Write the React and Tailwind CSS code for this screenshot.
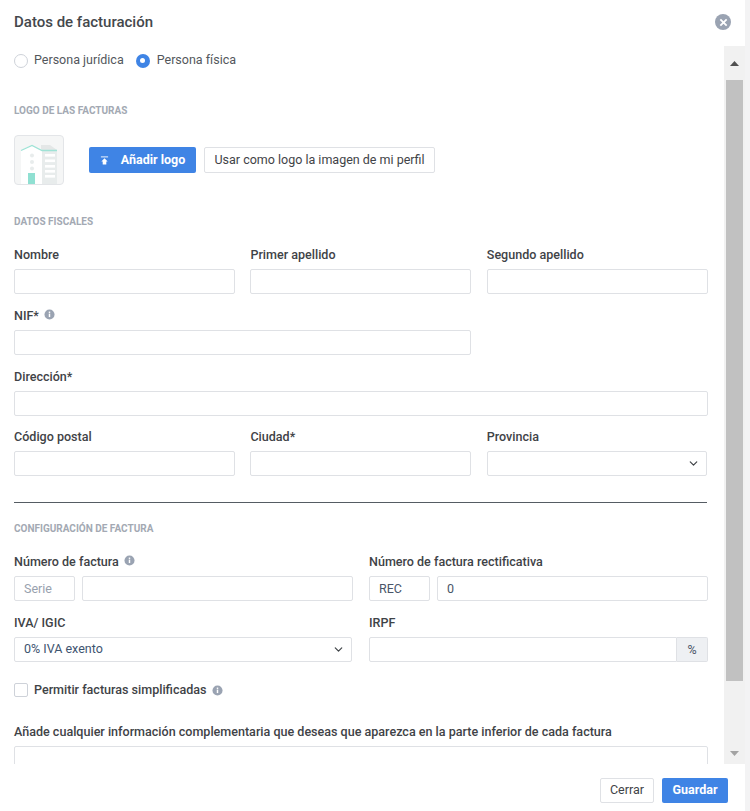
import { ChevronDown } from "lucide-react";

function InfoIcon({ className }) {
  return (
    <svg viewBox="0 0 12 12" className={className}>
      <circle cx="6" cy="6" r="5.5" fill="#9aa3b2" />
      <rect x="5.2" y="5" width="1.6" height="3.8" fill="#fff" />
      <rect x="5.2" y="2.8" width="1.6" height="1.5" fill="#fff" />
    </svg>
  );
}

function BuildingLogo() {
  return (
    <div className="w-[50px] h-[50px] rounded-[4px] border border-[#e3e5e8] bg-[#f5f6f6] overflow-hidden">
      <svg viewBox="0 0 48 48" className="w-full h-full">
        <path d="M26 9 L35 9 L42 14 L26 14 Z" fill="#e4e7e7" />
        <path d="M6 14 L17 9 L27 14 L27 48 L6 48 Z" fill="#fff" />
        <rect x="27" y="14" width="15" height="34" fill="#e8ecec" />
        <path d="M6 14.5 L17 9.5 L27 14.5 L42 14.5" fill="none" stroke="#9fe3d6" strokeWidth="1.3" />
        <circle cx="17" cy="19.5" r="2" fill="#e8ecec" />
        <circle cx="17" cy="26" r="2" fill="#e8ecec" />
        <circle cx="17" cy="32.5" r="2" fill="#e8ecec" />
        <rect x="13" y="37" width="7" height="11" fill="#90e0d2" />
        <rect x="30" y="18" width="10" height="2.6" fill="#fff" />
        <rect x="30" y="23.5" width="10" height="2.6" fill="#fff" />
        <rect x="30" y="29" width="10" height="2.6" fill="#fff" />
        <rect x="30" y="34" width="10" height="2.6" fill="#fff" />
        <rect x="30" y="39" width="10" height="2.6" fill="#fff" />
      </svg>
    </div>
  );
}

function Label({ children, info }) {
  return (
    <div className="h-[15px] mb-[7px] flex items-center gap-[5px] text-[12.55px] leading-[15px] font-medium text-[#3f4347]">
      <span>{children}</span>
      {info && <InfoIcon className="w-[11px] h-[11px] mt-[-2px]" />}
    </div>
  );
}

function Input({ value, placeholder, className = "" }) {
  return (
    <div className={`h-[25px] rounded-[2px] border border-[#dfe1e5] bg-white px-[9px] text-[12.5px] leading-[23px] ${placeholder ? "text-[#98a1ae]" : "text-[#4a5568]"} ${className}`}>
      {value || placeholder}
    </div>
  );
}

function Select({ value, className = "" }) {
  return (
    <div className={`h-[25px] rounded-[2px] border border-[#dfe1e5] bg-white pl-[9px] pr-[6px] flex items-center justify-between text-[12.5px] text-[#3e5470] ${className}`}>
      <span>{value}</span>
      <ChevronDown size={13} strokeWidth={2.2} className="text-[#3f4347]" />
    </div>
  );
}

function SectionTitle({ children }) {
  return <div className="text-[10px] leading-[12px] font-bold uppercase text-[#a3a9b3]">{children}</div>;
}

export default function App() {
  return (
    <div className="w-[750px] h-[811px] bg-[#f3f3f4] overflow-hidden" style={{ fontFamily: "Roboto, sans-serif" }}>
      <div className="w-[745px] h-full bg-white flex flex-col">
        {/* Header */}
        <div className="h-[46px] shrink-0 flex items-start justify-between pl-[14px] pr-[14px] pt-[13px]">
          <h1 className="text-[15px] leading-[18px] font-medium text-[#44484c]">Datos de facturación</h1>
          <div className="w-[16px] h-[16px] mt-[1px] rounded-full bg-[#9aa3b2] flex items-center justify-center">
            <svg viewBox="0 0 10 10" className="w-[9px] h-[9px]">
              <path d="M1.5 1.5 L8.5 8.5 M8.5 1.5 L1.5 8.5" stroke="#fff" strokeWidth="2" />
            </svg>
          </div>
        </div>

        {/* Body */}
        <div className="h-[718px] shrink-0 flex">
          <div className="w-[708px] shrink-0 pl-[14px] overflow-hidden">
            <div className="flex items-center h-[15px] mt-[7px] text-[12.5px] text-[#53575c]">
              <label className="flex items-center gap-[6px]">
                <span className="w-[14px] h-[14px] rounded-full border border-[#ced2d9] bg-white" />
                Persona jurídica
              </label>
              <label className="ml-[12px] flex items-center gap-[7px]">
                <span className="w-[14px] h-[14px] rounded-full bg-[#3f84e5] flex items-center justify-center">
                  <span className="w-[5px] h-[5px] rounded-full bg-white" />
                </span>
                Persona física
              </label>
            </div>

            <div className="mt-[37px]">
              <SectionTitle>Logo de las facturas</SectionTitle>
            </div>

            <div className="mt-[18px] flex items-center">
              <BuildingLogo />
              <button className="ml-[25px] w-[107px] h-[26px] rounded-[2px] bg-[#3f84e5] flex items-center justify-center gap-[12px] text-[12.5px] font-bold text-white">
                <svg viewBox="0 0 10 10" className="w-[9px] h-[9px]">
                  <rect x="1" y="0.5" width="8" height="1" fill="#fff" />
                  <path d="M5 2.5 L8.5 6 L7 6 L7 9.5 L3 9.5 L3 6 L1.5 6 Z" fill="#fff" />
                </svg>
                Añadir logo
              </button>
              <button className="ml-[8px] w-[231px] h-[26px] rounded-[2px] border border-[#dfe1e5] bg-white text-[12.5px] text-[#3f4347]">
                Usar como logo la imagen de mi perfil
              </button>
            </div>

            <div className="mt-[31px]">
              <SectionTitle>Datos fiscales</SectionTitle>
            </div>

            <div className="mt-[19px] grid grid-cols-[221px_221px_221px] gap-x-[15.4px] w-[694px]">
              <div><Label>Nombre</Label><Input /></div>
              <div><Label>Primer apellido</Label><Input /></div>
              <div><Label>Segundo apellido</Label><Input /></div>
            </div>

            <div className="mt-[14px] w-[457px]">
              <Label info>NIF*</Label>
              <Input />
            </div>

            <div className="mt-[14px] w-[694px]">
              <Label>Dirección*</Label>
              <Input />
            </div>

            <div className="mt-[13px] grid grid-cols-[221px_221px_221px] gap-x-[15.4px] w-[694px]">
              <div><Label>Código postal</Label><Input /></div>
              <div><Label>Ciudad*</Label><Input /></div>
              <div><Label>Provincia</Label><Select className="mr-[1px]" /></div>
            </div>

            <div className="mt-[26px] w-[693px] h-px bg-[#555c63]" />

            <div className="mt-[20px]">
              <SectionTitle>Configuración de factura</SectionTitle>
            </div>

            <div className="mt-[19px] grid grid-cols-2 gap-x-[16px] w-[694px]">
              <div>
                <Label info>Número de factura</Label>
                <div className="flex gap-[7px]">
                  <Input placeholder="Serie" className="w-[61px] shrink-0" />
                  <Input className="flex-1" />
                </div>
              </div>
              <div>
                <Label>Número de factura rectificativa</Label>
                <div className="flex gap-[7px]">
                  <Input value="REC" className="w-[61px] shrink-0" />
                  <Input value="0" className="flex-1" />
                </div>
              </div>
            </div>

            <div className="mt-[14px] grid grid-cols-2 gap-x-[16px] w-[694px]">
              <div>
                <Label>IVA/ IGIC</Label>
                <Select value="0% IVA exento" className="mr-[1px]" />
              </div>
              <div>
                <Label>IRPF</Label>
                <div className="flex h-[25px]">
                  <div className="flex-1 rounded-l-[2px] border border-[#dfe1e5] bg-white" />
                  <div className="w-[31px] rounded-r-[2px] border border-l-0 border-[#dfe1e5] bg-[#eef0f3] text-center text-[12.5px] leading-[23px] text-[#4a5568]">%</div>
                </div>
              </div>
            </div>

            <label className="mt-[21px] flex items-center h-[14px] text-[12.55px] font-medium text-[#3f4347]">
              <span className="w-[14px] h-[14px] rounded-[2px] border border-[#ced2d9] bg-white" />
              <span className="ml-[6px]">Permitir facturas simplificadas</span>
              <InfoIcon className="ml-[5px] w-[11px] h-[11px]" />
            </label>

            <div className="mt-[27px] w-[694px]">
              <Label>Añade cualquier información complementaria que deseas que aparezca en la parte inferior de cada factura</Label>
              <div className="h-[60px] rounded-[2px] border border-[#dfe1e5] bg-white" />
            </div>
          </div>

          {/* Scrollbar */}
          <div className="ml-[16px] w-[21px] shrink-0 bg-[#f1f1f1] flex flex-col items-center">
            <div className="h-[34px] w-full flex items-center justify-center">
              <svg viewBox="0 0 9 5" className="w-[9px] h-[5px]"><path d="M4.5 0 L9 5 L0 5 Z" fill="#505050" /></svg>
            </div>
            <div className="w-[17px] h-[601px] bg-[#c1c1c1]" />
            <div className="flex-1 w-full flex items-end justify-center pb-[8px]">
              <svg viewBox="0 0 9 5" className="w-[9px] h-[5px]"><path d="M0 0 L9 0 L4.5 5 Z" fill="#a3a3a3" /></svg>
            </div>
          </div>
        </div>

        {/* Footer */}
        <div className="flex-1 flex justify-end gap-[8px] pr-[17px] pt-[14px]">
          <button className="w-[54px] h-[25px] rounded-[2px] border border-[#dfe1e5] bg-white text-[12.5px] text-[#3f4347]">Cerrar</button>
          <button className="w-[66px] h-[25px] rounded-[2px] bg-[#3f84e5] text-[12.5px] font-bold text-white">Guardar</button>
        </div>
      </div>
    </div>
  );
}
